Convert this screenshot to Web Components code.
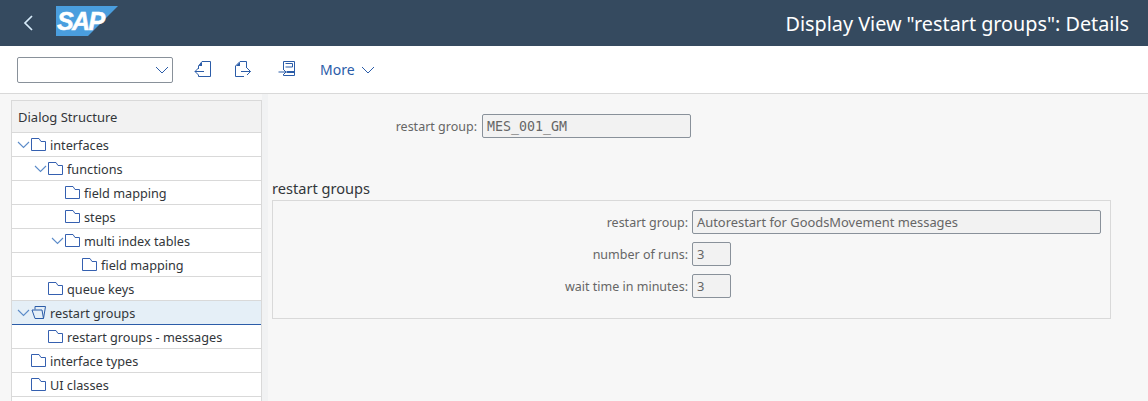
<!DOCTYPE html>
<html>
<head>
<meta charset="utf-8">
<title>Display View</title>
<style>
  html, body { margin: 0; height: 100%; overflow: hidden; background: #f7f7f7; }
  body { font-family: "Noto Sans", "Open Sans", sans-serif; font-size: 12.7px; color: #32363a; display: flex; flex-direction: column; }
  .content { display: flex; flex: 1; min-height: 0; }
</style>
</head>
<body>
<shell-bar>Display View "restart groups": Details</shell-bar>
<app-toolbar></app-toolbar>
<div class="content">
  <tree-panel title="Dialog Structure">
    <tree-row level="0" open>interfaces</tree-row>
    <tree-row level="1" open>functions</tree-row>
    <tree-row level="2">field mapping</tree-row>
    <tree-row level="2">steps</tree-row>
    <tree-row level="2" open>multi index tables</tree-row>
    <tree-row level="3">field mapping</tree-row>
    <tree-row level="1">queue keys</tree-row>
    <tree-row level="0" open selected>restart groups</tree-row>
    <tree-row level="1">restart groups - messages</tree-row>
    <tree-row level="0">interface types</tree-row>
    <tree-row level="0">UI classes</tree-row>
  </tree-panel>
  <detail-area>
    <form-field class="key" label="restart group:" value="MES_001_GM" width="209" mono></form-field>
    <group-box title="restart groups">
      <form-field label="restart group:" value="Autorestart for GoodsMovement messages" width="409"></form-field>
      <form-field label="number of runs:" value="3" width="39"></form-field>
      <form-field label="wait time in minutes:" value="3" width="39"></form-field>
    </group-box>
  </detail-area>
</div>

<script>
// small helper, every element gets an open shadow root
function shadow(el, html) {
  el.attachShadow({ mode: 'open' }).innerHTML = html;
}

class ShellBar extends HTMLElement {
  connectedCallback() {
    shadow(this, `
      <style>
        :host { display: flex; align-items: center; height: 46px; flex: none; background: #354a5f; color: #fff; box-sizing: border-box; padding: 0 19px 0 23px; }
        .back { width: 11px; height: 16px; margin-right: 22px; }
        .logo { display: block; position: relative; width: 62px; height: 30px; margin-top: -4px; }
        .logo svg { display: block; }
        .logo span { position: absolute; left: 1px; top: 2px; font: italic bold 25px/27px "Liberation Sans", sans-serif; letter-spacing: -1.6px; color: #fff; -webkit-text-stroke: .5px #fff; }
        .title { margin-left: auto; font-size: 19.8px; white-space: nowrap; }
      </style>
      <svg class="back" viewBox="0 0 11 16"><path d="M9 1 L2 8 L9 15" fill="none" stroke="#d8ecfa" stroke-width="1.7"/></svg>
      <div class="logo">
        <svg width="62" height="30" viewBox="0 0 62 30"><polygon points="0,0 62,0 32,30 0,30" fill="#4a9ede"/></svg>
        <span>SAP</span>
      </div>
      <div class="title"><slot></slot></div>`);
  }
}

class AppToolbar extends HTMLElement {
  connectedCallback() {
    shadow(this, `
      <style>
        :host { display: flex; align-items: center; height: 48px; flex: none; box-sizing: border-box; background: #fff; border-bottom: 1px solid #d9d9d9; padding: 0 0 0 17px; color: #2b5ca8; }
        .select { width: 156px; height: 26px; box-sizing: border-box; border: 1px solid #89919a; border-radius: 2px; display: flex; align-items: center; justify-content: flex-end; padding-right: 3px; margin-right: 21px; }
        svg { display: block; flex: none; }
        .ic { fill: none; stroke: currentColor; stroke-width: 1; }
        .more { margin-left: 23px; font-size: 14px; display: flex; align-items: center; gap: 6px; }
      </style>
      <div class="select"><svg width="14" height="8" viewBox="0 0 14 8"><path class="ic" d="M1 1 L7 7 L13 1" stroke-width="1.2"/></svg></div>
      <svg width="17" height="17" viewBox="0 0 17 17" style="margin-right:24px"><path class="ic" d="M8 .5 H16.5 V15.5 H4.5 V14 M4.5 8 V5 L8 .5 M1 10.5 H10 M4.5 7 L1 10.5 L4.5 14"/><path d="M8 1 V5 H4.5 Z" fill="currentColor"/></svg>
      <svg width="17" height="17" viewBox="0 0 17 17" style="margin-right:26px"><path class="ic" d="M5 .5 H11.5 V7 M.5 5 V15.5 H9 M.5 5 L5 .5 M6 10.5 H15.5 M12 7 L15.5 10.5 L12 14"/><path d="M5 1 V5 H1 Z" fill="currentColor"/></svg>
      <svg width="19" height="17" viewBox="0 0 19 17"><path class="ic" d="M5.5 8 V.5 H16.5 V14.5 H5.5 V13.5 M7.5 2.5 H14.5 V6 H7.5 M.5 11 H8 M5 8 L8 11 L5 14"/><path d="M8.5 10 H16 V12 H8.5 Z" fill="currentColor"/></svg>
      <div class="more">More <svg width="14" height="8" viewBox="0 0 14 8"><path class="ic" d="M1 1 L7 7 L13 1" stroke-width="1.2"/></svg></div>`);
  }
}

class TreePanel extends HTMLElement {
  connectedCallback() {
    shadow(this, `
      <style>
        :host { display: block; flex: none; width: 249px; margin: 6px 0 0 11px; background: #fff; border: solid #d9d9d9; border-width: 1px 1px 0 1px; overflow: hidden; }
        .head { height: 31px; display: flex; align-items: center; padding-left: 6px; background: #f2f2f2; border-bottom: 1px solid #d9d9d9; font-size: 13px; }
      </style>
      <div class="head">${this.getAttribute('title')}</div>
      <slot></slot>`);
  }
}

class TreeRow extends HTMLElement {
  connectedCallback() {
    const level = +this.getAttribute('level');
    const open = this.hasAttribute('open');
    const selected = this.hasAttribute('selected');
    const folder = selected
      ? `<path d="M4 3.5 V.5 H14.5 L12.5 12.5 H4 L1 4 H11 L12.5 12.5" fill="none" stroke="#2b5ca8"/>`
      : `<path d="M.5 12.5 V.5 H8 L10 3.5 H14.5 V12.5 Z" fill="none" stroke="#3560b0"/>`;
    shadow(this, `
      <style>
        :host { display: flex; align-items: center; height: 23px; border-bottom: 1px solid #d9d9d9; white-space: nowrap; padding-left: ${5 + level * 17}px; }
        :host([selected]) { background: #e5eff7; border-bottom-color: #2b5ca8; }
        .arrow { width: 14px; flex: none; }
        svg { display: block; }
        .folder { flex: none; margin-right: 4px; }
      </style>
      <div class="arrow">${open ? `<svg width="13" height="8" viewBox="0 0 13 8"><path d="M1 1 L6.5 6.5 L12 1" fill="none" stroke="#5b8bc9" stroke-width="1.1"/></svg>` : ''}</div>
      <svg class="folder" width="15" height="13" viewBox="0 0 15 13">${folder}</svg>
      <slot></slot>`);
  }
}

class DetailArea extends HTMLElement {
  connectedCallback() {
    shadow(this, `
      <style>
        :host { display: block; flex: 1; min-width: 0; padding: 20px 37px 0 4px; border-left: 6px solid #f1f2f3; }
        ::slotted(form-field.key) { --label-width: 205px; --label-gap: 5px; margin-bottom: 41px; }
      </style>
      <slot></slot>`);
  }
}

class GroupBox extends HTMLElement {
  connectedCallback() {
    shadow(this, `
      <style>
        :host { display: block; }
        h3 { margin: 0 0 1px; font-size: 14.6px; font-weight: 400; line-height: 18px; height: 20px; }
        .box { box-sizing: border-box; height: 119px; border: 1px solid #d9d9d9; padding: 9px 0 0 0; display: flex; flex-direction: column; gap: 8px; }
      </style>
      <h3>${this.getAttribute('title')}</h3>
      <div class="box"><slot></slot></div>`);
  }
}

class FormField extends HTMLElement {
  connectedCallback() {
    const mono = this.hasAttribute('mono');
    shadow(this, `
      <style>
        :host { display: flex; align-items: center; height: 24px; color: #666; }
        .label { width: var(--label-width, 415px); text-align: right; flex: none; white-space: nowrap; font-size: 12.5px; }
        .value { box-sizing: border-box; height: 24px; width: ${this.getAttribute('width')}px; margin-left: var(--label-gap, 4px); background: #f2f2f2; border: 1px solid #89919a; border-radius: 2px; padding: 0 4px; line-height: 22px; white-space: nowrap; overflow: hidden; font-size: 12.9px; ${mono ? 'font-family: "DejaVu Sans Mono", monospace; font-size: 13.3px; line-height: 24px;' : ''} }
      </style>
      <div class="label">${this.getAttribute('label')}</div>
      <div class="value">${this.getAttribute('value')}</div>`);
  }
}

customElements.define('shell-bar', ShellBar);
customElements.define('app-toolbar', AppToolbar);
customElements.define('tree-panel', TreePanel);
customElements.define('tree-row', TreeRow);
customElements.define('detail-area', DetailArea);
customElements.define('group-box', GroupBox);
customElements.define('form-field', FormField);
</script>
</body>
</html>
